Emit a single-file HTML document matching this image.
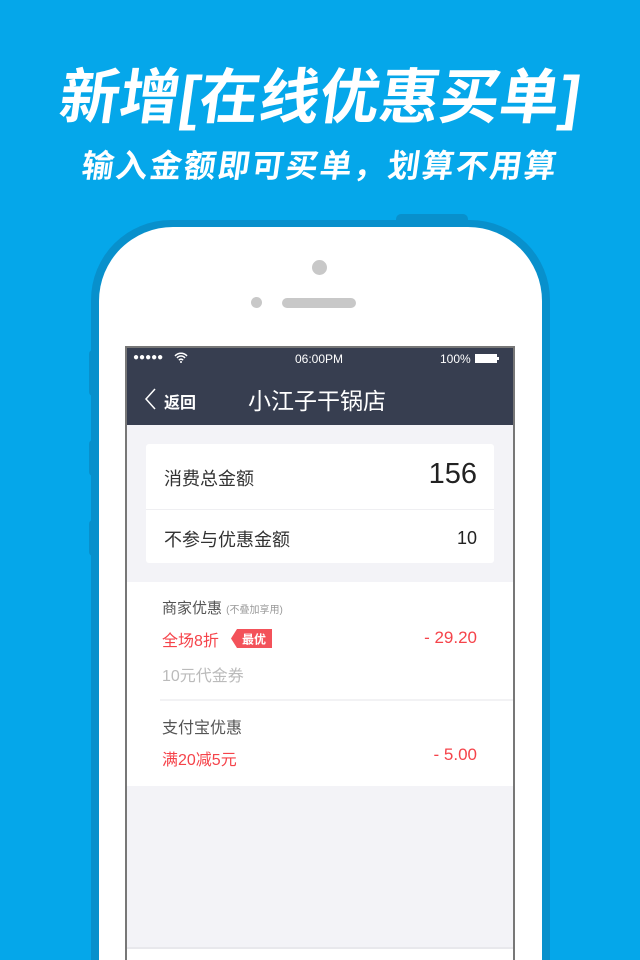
<!DOCTYPE html>
<html style="overflow:hidden;height:960px"><head><meta charset="utf-8"><style>
*{margin:0;padding:0;box-sizing:border-box}
body{width:640px;height:960px;overflow:hidden;background:#05a7ea;position:relative;font-family:"Liberation Sans","Noto Sans CJK SC",sans-serif}
.a{position:absolute}
.t1{left:0;width:640px;top:62px;text-align:center;color:#fff;font-size:60px;font-weight:bold;letter-spacing:0px;line-height:72px;white-space:nowrap;transform:skewX(-8deg)}
.t2{left:0;width:640px;top:146px;text-align:center;color:#fff;font-size:32px;font-weight:bold;letter-spacing:2px;line-height:40px;white-space:nowrap;transform:skewX(-8deg)}
.txt{font-size:18px;color:#333;white-space:nowrap}
.red{color:#f5434a}
</style></head><body>
<div class="a t1">新增[在线优惠买单]</div>
<div class="a t2">输入金额即可买单，划算不用算</div>
<div class="a" style="left:396px;top:214px;width:72px;height:14px;background:#0890cc;border-radius:5px"></div>
<div class="a" style="left:89px;top:350px;width:12px;height:46px;background:#0890cc;border-radius:4px"></div>
<div class="a" style="left:89px;top:440px;width:12px;height:36px;background:#0890cc;border-radius:4px"></div>
<div class="a" style="left:89px;top:520px;width:12px;height:36px;background:#0890cc;border-radius:4px"></div>
<div class="a" style="left:91px;top:220px;width:459px;height:740px;background:#0890cc;border-radius:80px 80px 0 0"></div>
<div class="a" style="left:99px;top:227px;width:443px;height:733px;background:#fff;border-radius:74px 74px 0 0"></div>
<div class="a" style="left:312px;top:260px;width:15px;height:15px;background:#c8c8c8;border-radius:50%"></div>
<div class="a" style="left:251px;top:297px;width:11px;height:11px;background:#c8c8c8;border-radius:50%"></div>
<div class="a" style="left:282px;top:298px;width:74px;height:10px;background:#c8c8c8;border-radius:5px"></div>
<!-- screen -->
<div class="a" style="left:125px;top:346px;width:390px;height:614px;background:#f3f3f7;border:2px solid #777;border-bottom:none"></div>
<div class="a" style="left:127px;top:348px;width:386px;height:77px;background:#373e50"></div>
<div class="a" style="left:133px;top:352px;color:#fff;font-size:10px;letter-spacing:0px">●●●●●</div>
<svg class="a" style="left:174px;top:352px" width="14" height="11" viewBox="0 0 14 11"><path d="M1 4a8 8 0 0 1 12 0M3 6a5 5 0 0 1 8 0M5 8.3a2.3 2.3 0 0 1 4 0" stroke="#fff" stroke-width="1.5" fill="none"/><circle cx="7" cy="10" r="1" fill="#fff"/></svg>
<div class="a" style="left:295px;top:352px;color:#fff;font-size:12px">06:00PM</div>
<div class="a" style="left:440px;top:352px;color:#fff;font-size:12px">100%</div>
<div class="a" style="left:475px;top:354px;width:22px;height:9px;background:#fff"></div>
<div class="a" style="left:497px;top:357px;width:2px;height:3px;background:#fff"></div>
<svg class="a" style="left:143px;top:388px" width="14" height="22" viewBox="0 0 14 22"><path d="M12 1L3 11l9 10" stroke="#fff" stroke-width="1.5" fill="none"/></svg>
<div class="a" style="left:164px;top:389px;color:#fff;font-size:16px;font-weight:bold">返回</div>
<div class="a" style="left:248px;top:382px;color:#fff;font-size:23px">小江子干锅店</div>
<!-- card -->
<div class="a" style="left:146px;top:444px;width:348px;height:119px;background:#fff;border-radius:3px"></div>
<div class="a" style="left:146px;top:509px;width:348px;height:1px;background:#efeff2"></div>
<div class="a txt" style="left:164px;top:465px">消费总金额</div>
<div class="a" style="left:400px;top:458px;width:77px;text-align:right;font-size:29px;color:#222">156</div>
<div class="a txt" style="left:164px;top:526px">不参与优惠金额</div>
<div class="a" style="left:420px;top:528px;width:57px;text-align:right;font-size:18px;color:#222">10</div>
<!-- section -->
<div class="a" style="left:127px;top:582px;width:386px;height:204px;background:#fff"></div>
<div class="a" style="left:160px;top:699px;width:353px;height:2px;background:#f2f2f4"></div>
<div class="a txt" style="left:162px;top:597px;font-size:15px;color:#555">商家优惠 <span style="font-size:10px;color:#999">(不叠加享用)</span></div>
<div class="a txt red" style="left:162px;top:627px;font-size:16px">全场8折</div>
<svg class="a" style="left:231px;top:629px" width="41" height="19"><path d="M6 0H41V19H6L0 9.5Z" fill="#f3525a"/><text x="11" y="14.5" fill="#fff" font-size="12" font-weight="bold" font-family="Liberation Sans,Noto Sans CJK SC,sans-serif">最优</text></svg>
<div class="a red" style="left:400px;top:628px;width:77px;text-align:right;font-size:17px">- 29.20</div>
<div class="a txt" style="left:162px;top:662px;font-size:16px;color:#bbb">10元代金券</div>
<div class="a txt" style="left:162px;top:714px;font-size:16px;color:#555">支付宝优惠</div>
<div class="a txt red" style="left:162px;top:746px;font-size:16px">满20减5元</div>
<div class="a red" style="left:400px;top:745px;width:77px;text-align:right;font-size:17px">- 5.00</div>
<div class="a" style="left:127px;top:947px;width:386px;height:2px;background:#e8e8ec"></div>
<div class="a" style="left:127px;top:949px;width:386px;height:11px;background:#fff"></div>
</body></html>
